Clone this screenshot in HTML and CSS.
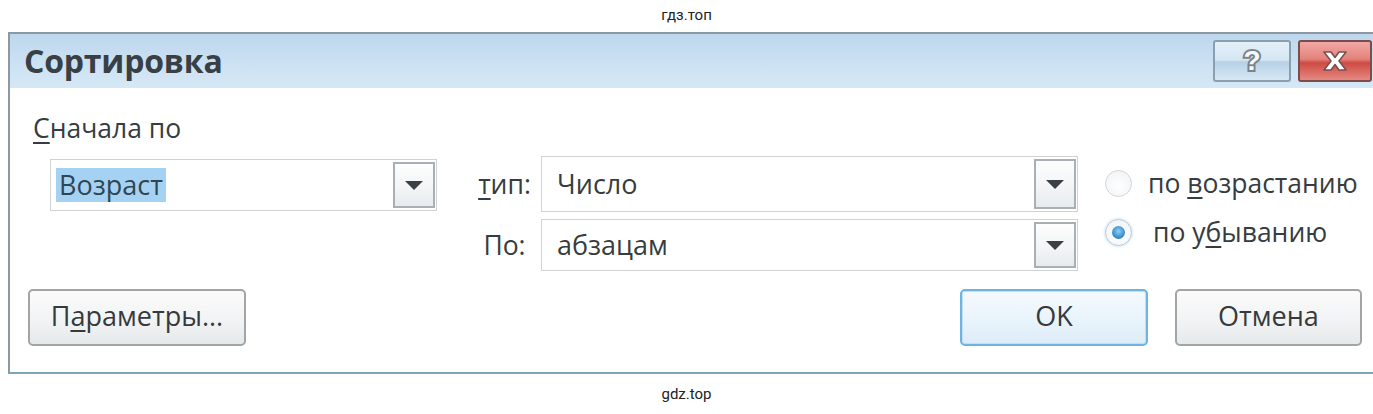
FILE: index.html
```html
<!DOCTYPE html>
<html lang="ru">
<head>
<meta charset="utf-8">
<title>Сортировка</title>
<link rel="stylesheet" href="styles.css">
</head>
<body>
<div class="caption caption-top">гдз.топ</div>
<div class="dialog">
  <div class="titlebar">
    <div class="title">Сортировка</div>
    <div class="caption-buttons">
      <div class="cap-btn help"><span class="help-glyph">?</span></div>
      <div class="cap-btn close">
        <svg width="32" height="24" viewBox="0 0 32 24">
          <path d="M5 3 L12 3 L16 8.5 L20 3 L27 3 L20 12 L27 21 L20 21 L16 15.5 L12 21 L5 21 L12 12 Z" fill="#ffffff" stroke="#7a5050" stroke-width="1.6" stroke-linejoin="round"/>
        </svg>
      </div>
    </div>
  </div>
  <div class="content">
    <div class="first-label"><u>С</u>начала по</div>
    <div class="sort-row">
      <div class="combo combo-key">
        <span class="combo-text selected">Возраст</span>
        <span class="drop"><span class="tri"></span></span>
      </div>
      <div class="fields">
        <div class="field-label"><u>т</u>ип:</div>
        <div class="combo combo-type">
          <span class="combo-text">Число</span>
          <span class="drop"><span class="tri"></span></span>
        </div>
        <div class="field-label">По:</div>
        <div class="combo combo-by">
          <span class="combo-text">абзацам</span>
          <span class="drop"><span class="tri"></span></span>
        </div>
      </div>
      <div class="radios">
        <div class="radio-row"><span class="radio"></span><span class="radio-text">по <u>в</u>озрастанию</span></div>
        <div class="radio-row checked"><span class="radio"><span class="dot"></span></span><span class="radio-text">по у<u>б</u>ыванию</span></div>
      </div>
    </div>
    <div class="button-row">
      <div class="btn btn-params">П<u>а</u>раметры...</div>
      <div class="btn btn-ok">OK</div>
      <div class="btn btn-cancel">Отмена</div>
    </div>
  </div>
</div>
<div class="caption caption-bottom">gdz.top</div>
</body>
</html>
```
FILE: styles.css
```css
* { box-sizing: border-box; }
html, body { margin: 0; padding: 0; background: #ffffff; }
body { width: 1373px; height: 414px; overflow: hidden; font-family: "Open Sans", "Noto Sans", sans-serif; color: #373c40; }

.caption { font-family: Roboto, "Liberation Sans", sans-serif; font-size: 15px; color: #222; text-align: center; }
.caption-top { height: 32px; line-height: 30px; }
.caption-bottom { height: 40px; line-height: 40px; }

.dialog {
  margin-left: 8px;
  height: 342px;
  border-top: 2px solid #8b99a5;
  border-left: 2px solid #8b99a5;
  border-bottom: 2px solid #7fa4b8;
  display: flex;
  flex-direction: column;
}

.titlebar {
  height: 54px;
  display: flex;
  align-items: center;
  padding-left: 14px;
  background: linear-gradient(#bed7ed, #cde2f3 60%, #d6e8f6);
}
.title { font-weight: 700; font-size: 32px; color: #384046; letter-spacing: -0.2px; margin-top: -2px; }
.caption-buttons { margin-left: auto; display: flex; gap: 7px; margin-right: 1px; }
.cap-btn { height: 42px; border-radius: 3px; display: flex; align-items: center; justify-content: center; }
.help { width: 78px; border: 2px solid #8aa0b0; background: linear-gradient(#e4f0f9 0%, #d4e6f3 48%, #b7d0e6 52%, #d7e8f4 100%); }
.help-glyph { font-family: "Liberation Sans", sans-serif; font-weight: 700; font-size: 28px; line-height: 30px; color: #f6f9fb; -webkit-text-stroke: 4px #77848c; paint-order: stroke fill; }
.close { width: 74px; border: 2px solid #7a4c4c; background: linear-gradient(#f1a8a3 0%, #e3827b 45%, #cd4b43 55%, #e58a82 100%); }

.content { flex: 1; }
.first-label { font-size: 26.5px; margin: 24px 0 0 23px; line-height: 32px; }
u { text-decoration: underline; text-underline-offset: 4px; text-decoration-thickness: 2px; }

.sort-row { display: flex; margin-top: 12px; }

.combo {
  display: flex;
  align-items: center;
  background: #fff;
  border: 1.5px solid #cfd3d6;
  font-size: 27px;
}
.combo-text { padding: 0 3px; line-height: 34px; }
.selected { background: #a5d2f3; color: #2f4652; }
.drop {
  margin-left: auto;
  width: 42px;
  height: calc(100% - 4px);
  margin-right: 1px;
  border: 2px solid #a9afb3;
  background: linear-gradient(#fdfdfd, #f3f5f6 55%, #e6ebee);
  display: flex;
  align-items: center;
  justify-content: center;
}
.tri { width: 0; height: 0; border-left: 9px solid transparent; border-right: 9px solid transparent; border-top: 9px solid #3a4043; }

.combo-key { margin: 3px 0 0 40px; width: 387px; height: 52px; padding-left: 5px; }

.fields {
  margin-left: 37px;
  display: grid;
  grid-template-columns: 61px 537px;
  column-gap: 6px;
  row-gap: 7px;
  align-items: center;
}
.field-label { font-size: 26.5px; text-align: center; white-space: nowrap; }
.combo-type { height: 56px; padding-left: 12px; }
.combo-by { height: 52px; padding-left: 12px; }

.radios { margin-left: 27px; display: flex; flex-direction: column; gap: 17px; margin-top: 11px; }
.radio-row { display: flex; align-items: center; font-size: 26.5px; }
.radio {
  width: 27px; height: 27px; border-radius: 50%;
  border: 1.5px solid #d1d6d9;
  background: radial-gradient(circle at 50% 60%, #ffffff, #eef1f3);
  display: flex; align-items: center; justify-content: center;
  flex: none;
}
.checked .radio { border-color: #b9c9d6; box-shadow: 0 0 3px #b3d3ea; }
.dot { width: 13px; height: 13px; border-radius: 50%; background: radial-gradient(circle at 50% 40%, #8fd0f2, #3b8fcc 60%, #2c6ea8); }
.radio-text { margin-left: 16px; line-height: 32px; white-space: nowrap; }
.checked .radio-text { margin-left: 21px; }

.button-row { display: flex; margin-top: 18px; padding-left: 18px; }
.btn {
  height: 57px;
  border: 2px solid #a2a4a6;
  border-radius: 5px;
  background: linear-gradient(#fbfbfb, #f2f3f4 55%, #e6e9eb);
  font-size: 27px;
  display: flex; align-items: center; justify-content: center;
  padding-bottom: 4px;
  color: #363a3d;
}
.btn-params { width: 218px; }
.btn-ok { width: 188px; margin-left: auto; border-color: #6fb4e0; background: linear-gradient(#f4fafe, #e9f4fb 55%, #dcecf7); box-shadow: inset 0 0 0 1px #bfe0f4; }
.btn-cancel { width: 187px; margin-left: 27px; margin-right: 11px; }
```
